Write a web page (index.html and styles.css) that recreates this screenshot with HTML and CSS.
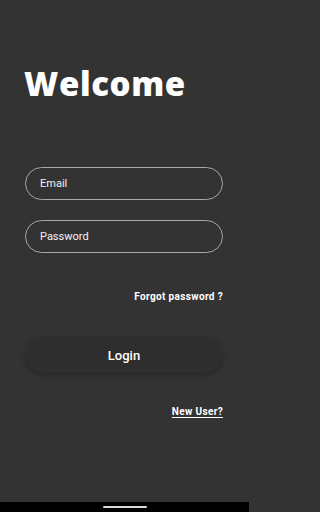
FILE: index.html
```html
<!DOCTYPE html>
<html>
<head>
<meta charset="utf-8">
<link rel="stylesheet" href="styles.css">
</head>
<body>
<div class="screen">
  <main class="content">
    <h1 class="title">Welcome</h1>
    <div class="field"><span class="placeholder">Email</span></div>
    <div class="field field-second"><span class="placeholder">Password</span></div>
    <div class="row-right forgot-row"><a class="link">Forgot password ?</a></div>
    <button class="login">Login</button>
    <div class="row-right new-row"><a class="link underline">New User?</a></div>
  </main>
  <div class="navbar"><span class="handle"></span></div>
</div>
</body>
</html>
```
FILE: styles.css
```css
html, body {
  margin: 0;
  padding: 0;
  background: #333333;
}
.screen {
  width: 249px;
  height: 512px;
  display: flex;
  flex-direction: column;
  background: #333333;
  font-family: Roboto, "Noto Sans", sans-serif;
  color: #ffffff;
}
.content {
  flex: 1;
  display: flex;
  flex-direction: column;
  padding: 0 26px 0 25px;
}
.title {
  margin: 64px 0 0 -1px;
  font-family: "Open Sans", sans-serif;
  font-weight: 800;
  font-size: 33px;
  line-height: 40px;
  letter-spacing: 0.6px;
}
.field {
  margin-top: 63px;
  height: 33px;
  border: 1px solid #a8a8a8;
  border-radius: 17px;
  box-sizing: border-box;
  display: flex;
  align-items: center;
  padding-left: 14px;
}
.field-second {
  margin-top: 20px;
}
.placeholder {
  font-size: 11px;
  color: #f4f4f4;
}
.row-right {
  display: flex;
  justify-content: flex-end;
}
.forgot-row {
  margin-top: 38px;
}
.link {
  font-size: 10px;
  font-weight: 700;
  color: #ffffff;
  line-height: 12px;
  letter-spacing: 0.35px;
}
.underline {
  text-decoration: underline;
  text-underline-offset: 2px;
}
.login {
  margin-top: 34px;
  height: 36px;
  border: none;
  border-radius: 18px;
  background: #2e2e2e;
  box-shadow: 0 2px 5px rgba(0,0,0,0.25);
  color: #ffffff;
  font-family: Roboto, sans-serif;
  font-weight: 500;
  font-size: 13px;
}
.new-row {
  margin-top: 33px;
}
.navbar {
  height: 10px;
  background: #000000;
  display: flex;
  justify-content: center;
  align-items: center;
}
.handle {
  width: 44px;
  height: 2px;
  border-radius: 1px;
  background: #d8d8d8;
}
```
